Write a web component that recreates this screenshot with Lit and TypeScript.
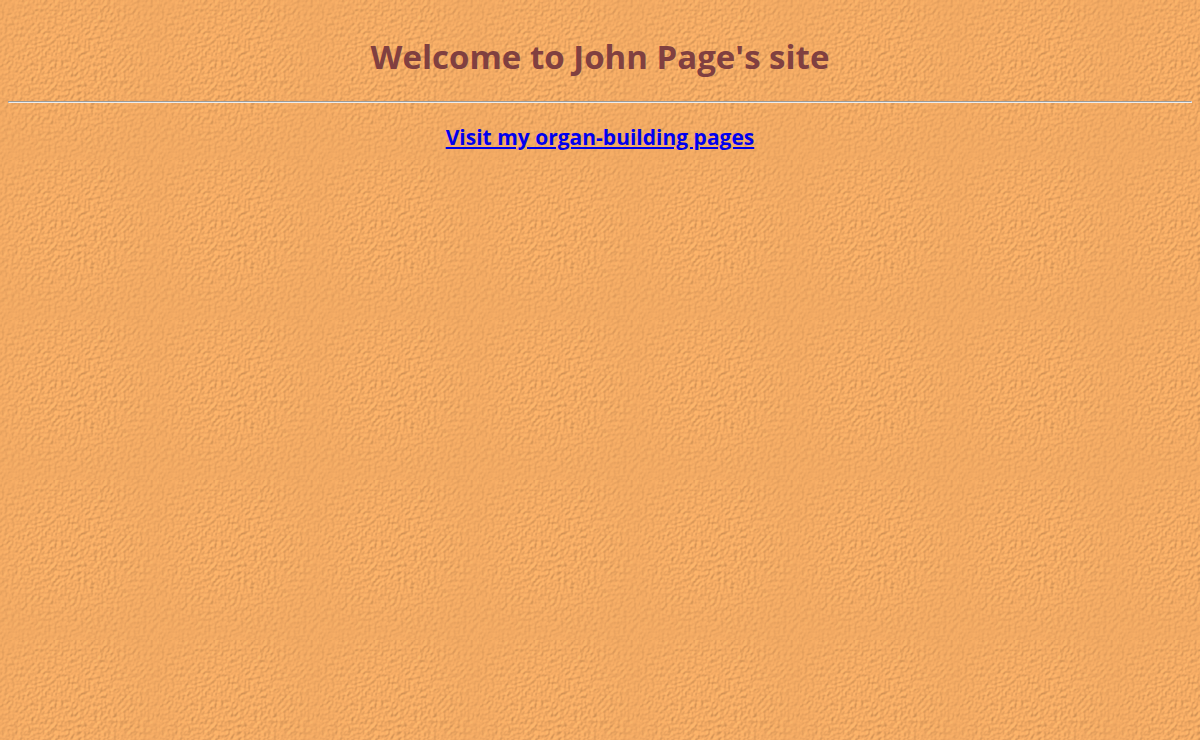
import { LitElement, html, css } from "lit";
import { customElement } from "lit/decorators.js";

@customElement("app-root")
export class AppRoot extends LitElement {
  static styles = css`
    :host {
      display: block;
      box-sizing: border-box;
      position: relative;
      isolation: isolate;
      min-height: 100vh;
      padding: 8px;
      background: #f1a963;
      font-family: "Open Sans", "Noto Sans", sans-serif;
      text-align: center;
    }
    .cloth {
      position: absolute;
      inset: 0;
      width: 100%;
      height: 100%;
      z-index: -1;
      opacity: 0.8;
    }
    .title {
      margin: 25px 0 20px;
      color: #804040;
      font-size: 33px;
      line-height: 48px;
      font-weight: 700;
    }
    .rule {
      margin: 0;
      border: 1px solid;
      border-color: #9a9a9a #eeeeee #eeeeee #9a9a9a;
    }
    .visit {
      margin: 20px 0;
      font-size: 21px;
      line-height: 28px;
      font-weight: 700;
    }
    .link {
      color: #0000ee;
      text-decoration: underline;
    }
  `;

  render() {
    return html`
      <svg class="cloth" aria-hidden="true">
        <defs>
          <filter id="weave" x="0" y="0" width="162" height="162" filterUnits="userSpaceOnUse" color-interpolation-filters="sRGB">
            <feTurbulence type="fractalNoise" baseFrequency="0.3 0.28" numOctaves="2" seed="7" stitchTiles="stitch" result="n" />
            <feDiffuseLighting in="n" surfaceScale="0.7" diffuseConstant="1.11" lighting-color="#ffb369">
              <feDistantLight azimuth="225" elevation="60" />
            </feDiffuseLighting>
          </filter>
          <radialGradient id="fade" gradientUnits="userSpaceOnUse" cx="72" cy="66" r="96">
            <stop offset="0.4" stop-color="#f0a862" stop-opacity="0" />
            <stop offset="1" stop-color="#f0a862" stop-opacity="0.5" />
          </radialGradient>
          <pattern id="tile" width="160" height="160" patternUnits="userSpaceOnUse">
            <rect width="162" height="162" filter="url(#weave)" />
            <rect width="160" height="160" fill="url(#fade)" />
          </pattern>
        </defs>
        <rect width="100%" height="100%" fill="url(#tile)" />
      </svg>
      <h1 class="title">Welcome to John Page's site</h1>
      <hr class="rule" />
      <h2 class="visit"><a class="link" href="#organ-building">Visit my organ-building pages</a></h2>
    `;
  }
}
